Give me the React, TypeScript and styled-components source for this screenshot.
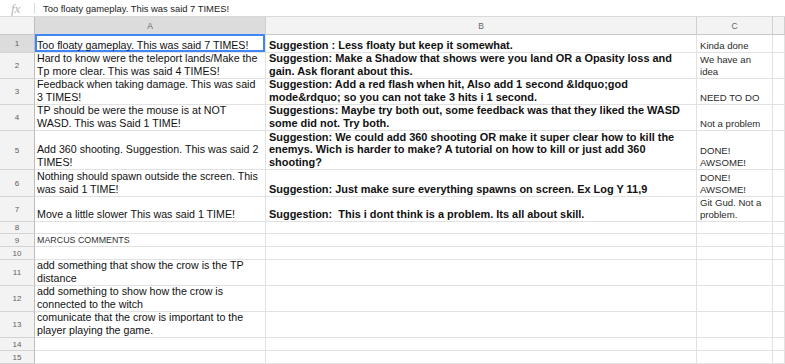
import React from 'react';
import styled, { createGlobalStyle, css } from 'styled-components';

const GlobalStyle = createGlobalStyle`
  html, body {
    margin: 0;
    padding: 0;
    background: #ffffff;
    overflow: hidden;
  }
  body {
    font-family: 'Liberation Sans', Arial, sans-serif;
  }
`;

type Kind = 'normal' | 'bold' | 'note' | 'small';

interface Row {
  height: number;
  a?: string;
  aKind?: Kind;
  b?: string;
  c?: string;
}

const ROWS: Row[] = [
  {
    height: 18,
    a: 'Too floaty gameplay. This was said 7 TIMES!',
    b: 'Suggestion : Less floaty but keep it somewhat.',
    c: 'Kinda done',
  },
  {
    height: 26,
    a: 'Hard to know were the teleport lands/Make the Tp more clear. This was said 4 TIMES!',
    b: 'Suggestion: Make a Shadow that shows were you land OR a Opasity loss and gain. Ask florant about this.',
    c: 'We have an idea',
  },
  {
    height: 26,
    a: 'Feedback when taking damage. This was said 3 TIMES!',
    b: 'Suggestion: Add a red flash when hit, Also add 1 second &ldquo;god mode&rdquo; so you can not take 3 hits i 1 second.',
    c: 'NEED TO DO',
  },
  {
    height: 26,
    a: 'TP should be were the mouse is at NOT WASD. This was Said 1 TIME!',
    b: 'Suggestions: Maybe try both out, some feedback was that they liked the WASD some did not. Try both.',
    c: 'Not a problem',
  },
  {
    height: 39,
    a: 'Add 360 shooting. Suggestion. This was said 2 TIMES!',
    b: 'Suggestion: We could add 360 shooting OR make it super clear how to kill the enemys. Wich is harder to make? A tutorial on how to kill or just add 360 shooting?',
    c: 'DONE! AWSOME!',
  },
  {
    height: 27,
    a: 'Nothing should spawn outside the screen. This was said 1 TIME!',
    b: 'Suggestion: Just make sure everything spawns on screen. Ex Log Y 11,9',
    c: 'DONE! AWSOME!',
  },
  {
    height: 25,
    a: 'Move a little slower This was said 1 TIME!',
    b: 'Suggestion:  This i dont think is a problem. Its all about skill.',
    c: 'Git Gud. Not a problem.',
  },
  { height: 12 },
  { height: 13, a: 'MARCUS COMMENTS', aKind: 'small' },
  { height: 13 },
  { height: 26, a: 'add something that show the crow is the TP distance' },
  { height: 26, a: 'add something to show how the crow is connected to the witch' },
  { height: 26, a: 'comunicate that the crow is important to the player playing the game.' },
  { height: 13 },
  { height: 13 },
];

const Page = styled.div`
  width: 785px;
  height: 364px;
  overflow: hidden;
  background: #fff;
`;

const FormulaBar = styled.div`
  display: flex;
  align-items: center;
  height: 17px;
  box-sizing: border-box;
  border-bottom: 1px solid #d9d9d9;
`;

const FxLabel = styled.div`
  width: 35px;
  height: 11px;
  box-sizing: border-box;
  padding-left: 11px;
  display: flex;
  align-items: center;
  font-family: 'Liberation Serif', 'Times New Roman', serif;
  font-style: italic;
  font-size: 13px;
  line-height: 13px;
  color: #b4b4b4;
  border-right: 1px solid #dadada;
`;

const FormulaText = styled.div`
  padding-left: 8px;
  font-size: 9.4px;
  color: #222;
  white-space: nowrap;
`;

const Sheet = styled.div<{ $rows: string }>`
  display: grid;
  grid-template-columns: 35px 231px 431px 76px 1fr;
  grid-template-rows: ${({ $rows }) => $rows};
`;

const headerBase = css`
  box-sizing: border-box;
  display: flex;
  align-items: center;
  justify-content: center;
  font-size: 8.5px;
  color: #666;
  border-right: 1px solid #c8c8c8;
  border-bottom: 1px solid #c8c8c8;
  overflow: hidden;
`;

const Corner = styled.div`
  ${headerBase};
  background: #f3f3f3;
  border-right-color: #bdbdbd;
`;

const ColHeader = styled.div<{ $active?: boolean }>`
  ${headerBase};
  background: ${({ $active }) => ($active ? '#dcdcdc' : '#f3f3f3')};
  border-right-color: #d0d0d0;
`;

const RowHeader = styled.div<{ $active?: boolean }>`
  ${headerBase};
  background: ${({ $active }) => ($active ? '#dcdcdc' : '#f3f3f3')};
  border-bottom-color: #d4d4d4;
  border-right-color: #bdbdbd;
  color: #606060;
  font-size: 8px;
`;

const kindStyles: Record<Kind, ReturnType<typeof css>> = {
  normal: css`
    font-size: 10.67px;
    line-height: 12.8px;
    color: #111;
  `,
  bold: css`
    font-size: 10.95px;
    line-height: 12.8px;
    font-weight: bold;
    color: #111;
  `,
  note: css`
    font-size: 9.6px;
    line-height: 12px;
    color: #2a2a2a;
  `,
  small: css`
    font-size: 8.9px;
    line-height: 12px;
    color: #333;
  `,
};

const Cell = styled.div<{ $kind: Kind; $inset?: number; $selected?: boolean }>`
  box-sizing: border-box;
  display: flex;
  flex-direction: column;
  justify-content: flex-end;
  padding: 0 3px 0 ${({ $inset }) => $inset ?? 2}px;
  border-right: 1px solid #e2e2e2;
  border-bottom: 1px solid #e2e2e2;
  overflow: hidden;
  white-space: pre-wrap;
  word-wrap: break-word;
  ${({ $kind }) => kindStyles[$kind]};
  ${({ $selected }) =>
    $selected &&
    css`
      box-shadow: inset 0 0 0 2px #4285f4;
      margin-top: -1px;
    `}
`;

const CellText = styled.span`
  display: block;
`;

export default function App() {
  const rowTemplate = ['18px', ...ROWS.map((r) => `${r.height}px`)].join(' ');

  return (
    <Page>
      <GlobalStyle />
      <FormulaBar>
        <FxLabel>fx</FxLabel>
        <FormulaText>{ROWS[0].a}</FormulaText>
      </FormulaBar>
      <Sheet $rows={rowTemplate}>
        <Corner />
        <ColHeader $active>A</ColHeader>
        <ColHeader>B</ColHeader>
        <ColHeader>C</ColHeader>
        <ColHeader />
        {ROWS.map((row, i) => (
          <React.Fragment key={i}>
            <RowHeader $active={i === 0}>{i + 1}</RowHeader>
            <Cell $kind={row.aKind ?? 'normal'} $selected={i === 0}>
              {row.a && <CellText>{row.a}</CellText>}
            </Cell>
            <Cell $kind="bold" $inset={3}>
              {row.b && <CellText>{row.b}</CellText>}
            </Cell>
            <Cell $kind="note" $inset={3}>
              {row.c && <CellText>{row.c}</CellText>}
            </Cell>
            <Cell $kind="normal" />
          </React.Fragment>
        ))}
      </Sheet>
    </Page>
  );
}
